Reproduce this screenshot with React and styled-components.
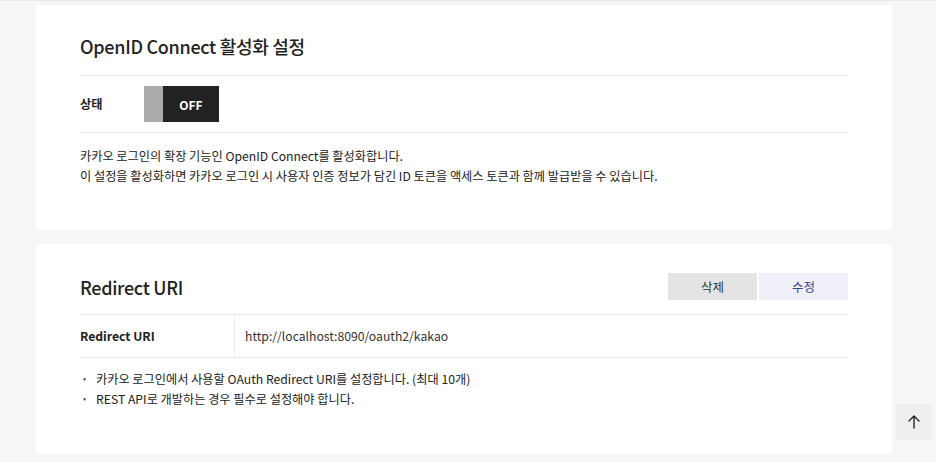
import styled, { createGlobalStyle } from "styled-components";

const GlobalStyle = createGlobalStyle`
  * {
    box-sizing: border-box;
  }

  body {
    margin: 0;
    background-color: #f5f6f6;
    color: #222222;
    font-family: "Noto Sans CJK KR", "Noto Sans", sans-serif;
  }
`;

const Page = styled.div`
  border-top: 1px solid #e9ebeb;
  padding: 4px 44px 20px 36px;
  display: flex;
  flex-direction: column;
  gap: 14px;
  box-sizing: content-box;
  width: 856px;
`;

const Card = styled.section`
  background-color: #ffffff;
  padding: 0 44px ${({ $bottom }) => $bottom}px;
`;

const Header = styled.div`
  display: flex;
  align-items: center;
  justify-content: space-between;
  padding: ${({ $top }) => $top}px 0 ${({ $bottom }) => $bottom}px;
  border-bottom: 1px solid #ececec;
`;

const Title = styled.h2`
  margin: 0;
  font-size: 18px;
  font-weight: 500;
  line-height: 26px;
  letter-spacing: -0.3px;
`;

const Row = styled.div`
  display: flex;
  align-items: center;
  height: ${({ $height }) => $height}px;
  border-bottom: 1px solid #ececec;
  font-size: 12.2px;
`;

const RowLabel = styled.div`
  width: ${({ $width }) => $width}px;
  align-self: stretch;
  display: flex;
  align-items: center;
  font-weight: 700;
  border-right: ${({ $divider }) => ($divider ? "1px solid #ececec" : "none")};
`;

const RowValue = styled.div`
  padding-left: ${({ $pad }) => $pad}px;
  color: #333333;
`;

const Toggle = styled.div`
  display: flex;
  height: 36px;
  width: 75px;
`;

const ToggleKnob = styled.span`
  width: 19px;
  background-color: #aaaaaa;
`;

const ToggleState = styled.span`
  flex: 1;
  display: flex;
  align-items: center;
  justify-content: center;
  background-color: #222222;
  color: #ffffff;
  font-size: 12px;
  font-weight: 700;
`;

const Desc = styled.p`
  margin: 13px 0 0;
  font-size: 12.2px;
  line-height: 20px;
  color: #222222;
`;

const Notes = styled.ul`
  margin: 11px 0 0;
  padding: 0;
  list-style: none;
  font-size: 12.2px;
  line-height: 20px;

  & li {
    display: flex;
  }

  & li::before {
    content: "•";
    flex: 0 0 13px;
    padding-left: 3px;
    font-size: 9px;
    color: #555555;
  }
`;

const Buttons = styled.div`
  display: flex;
  gap: 2px;
`;

const Button = styled.button`
  width: 89px;
  height: 27px;
  border: none;
  font-family: inherit;
  font-size: 12.5px;
  background-color: ${({ $primary }) => ($primary ? "#eff0f8" : "#e4e4e4")};
  color: ${({ $primary }) => ($primary ? "#34448f" : "#333333")};
  cursor: pointer;
`;

const TopButton = styled.button`
  position: fixed;
  left: 896px;
  top: 404px;
  width: 36px;
  height: 36px;
  border: none;
  background-color: #eeeeee;
  display: flex;
  align-items: center;
  justify-content: center;
  padding: 0;
  cursor: pointer;
`;

function App() {
  return (
    <>
      <GlobalStyle />
      <Page>
        <Card $bottom={44}>
          <Header $top={28} $bottom={16}>
            <Title>OpenID Connect 활성화 설정</Title>
          </Header>
          <Row $height={57}>
            <RowLabel $width={64}>상태</RowLabel>
            <Toggle>
              <ToggleKnob />
              <ToggleState>OFF</ToggleState>
            </Toggle>
          </Row>
          <Desc>
            카카오 로그인의 확장 기능인 OpenID Connect를 활성화합니다.
            <br />이 설정을 활성화하면 카카오 로그인 시 사용자 인증 정보가 담긴 ID
            토큰을 액세스 토큰과 함께 발급받을 수 있습니다.
          </Desc>
        </Card>
        <Card $bottom={45}>
          <Header $top={29} $bottom={14}>
            <Title>Redirect URI</Title>
            <Buttons>
              <Button>삭제</Button>
              <Button $primary>수정</Button>
            </Buttons>
          </Header>
          <Row $height={43}>
            <RowLabel $width={155} $divider>
              Redirect URI
            </RowLabel>
            <RowValue $pad={10}>http://localhost:8090/oauth2/kakao</RowValue>
          </Row>
          <Notes>
            <li>카카오 로그인에서 사용할 OAuth Redirect URI를 설정합니다. (최대 10개)</li>
            <li>REST API로 개발하는 경우 필수로 설정해야 합니다.</li>
          </Notes>
        </Card>
      </Page>
      <TopButton aria-label="맨 위로">
        <svg width="16" height="16" viewBox="0 0 16 16" fill="none">
          <path
            d="M8 14V2M3 7l5-5 5 5"
            stroke="#222222"
            strokeWidth="1.4"
            strokeLinecap="round"
            strokeLinejoin="round"
          />
        </svg>
      </TopButton>
    </>
  );
}

export default App;
